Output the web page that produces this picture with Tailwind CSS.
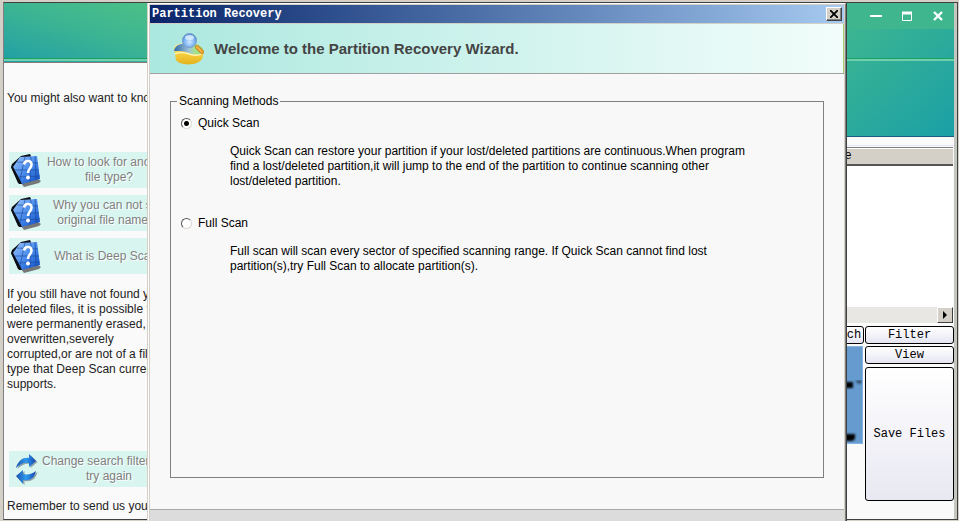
<!DOCTYPE html>
<html lang="en">
<head>
<meta charset="utf-8">
<title>Partition Recovery</title>
<script src="https://cdn.jsdelivr.net/npm/@tailwindcss/browser@4"></script>
</head>
<body class="relative h-screen overflow-hidden bg-[#d4d0c8] font-['Liberation_Sans',Arial,sans-serif] text-[12px] leading-[15px] text-[#222]">
<svg class="absolute h-0 w-0" aria-hidden="true">
  <defs>
    <linearGradient id="bk" x1="0" y1="0" x2="1" y2="1"><stop offset="0" stop-color="#9cc6fc"/><stop offset=".5" stop-color="#4a8cec"/><stop offset="1" stop-color="#0a48c0"/></linearGradient>
    <linearGradient id="ar" x1="0" y1="0" x2="1" y2="0"><stop offset="0" stop-color="#1b4fa8"/><stop offset=".5" stop-color="#2f9bee"/><stop offset="1" stop-color="#1544b0"/></linearGradient>
    <linearGradient id="gold" x1="0" y1="0" x2="0" y2="1"><stop offset="0" stop-color="#fdf0a0"/><stop offset=".5" stop-color="#f5cf3c"/><stop offset="1" stop-color="#e5b21e"/></linearGradient>
    <linearGradient id="disk" x1="0" y1="0" x2="1" y2="0"><stop offset="0" stop-color="#2f69a8"/><stop offset=".5" stop-color="#9cc3d8"/><stop offset=".7" stop-color="#a5e28c"/><stop offset="1" stop-color="#8fd680"/></linearGradient>
    <radialGradient id="lens" cx=".5" cy=".6" r=".6"><stop offset="0" stop-color="#cfe8ff"/><stop offset=".6" stop-color="#7fb6f5"/><stop offset="1" stop-color="#3f7fd0"/></radialGradient>
    <symbol id="book" viewBox="0 0 32 34">
      <path d="M11 3 20 1 21 3 14 20 11 31 8 30 1 14 2 11Z" fill="#0b0f18"/>
      <path d="M11 30 28 26 31 28 29 30 14 34Z" fill="#777"/>
      <path d="M10 4 27 3 30 26 12 31 3 14Z" fill="url(#bk)"/>
      <path d="M1 14 3 14 12 31 9 31Z" fill="#0b0f18"/>
      <path d="M7 9 28 10M5 17 29 17M8 24 30 23M15 4 10 27M21 4 20 29M25 3 26 27" stroke="#1a4596" stroke-width=".6" fill="none"/>
      <path d="M14 11.500C14.500 7 21.500 6.500 21.500 11.500 21.500 15.500 18 15.500 18 20" fill="none" stroke="#fff" stroke-width="2.600"/>
      <circle cx="18" cy="24.500" r="2" fill="#fff"/>
    </symbol>
  </defs>
</svg>

<main class="absolute top-[2px] right-px bottom-px left-[3px] flex justify-between border border-[#404040] border-l-[#808080] bg-[#fafafa]">
  <aside class="flex w-[190px] flex-col overflow-hidden whitespace-nowrap">
    <div class="h-[60px] shrink-0 border-b border-[#857b7b] bg-linear-to-tr from-[#1f9fa5] via-[#3db592] to-[#50c383]">
      <div class="mt-[55px] h-[3px] border-t border-[#20a060] bg-[#6fd0b0]"></div>
    </div>
    <p class="mt-7 px-[3px]">You might also want to know:</p>
    <nav class="mt-[46px] flex flex-col gap-[7px] px-[5px] text-center text-[#808080] [text-shadow:1px_1px_0_#fff]">
      <a href="#" class="flex h-9 items-center bg-[#d9f5f0]"><svg class="ml-[1px] h-[34px] w-8 shrink-0"><use href="#book"/></svg><span class="w-[134px]">How to look for another<br>file type?</span></a>
      <a href="#" class="flex h-9 items-center bg-[#d9f5f0]"><svg class="ml-[1px] h-[34px] w-8 shrink-0"><use href="#book"/></svg><span class="w-[134px]">Why you can not see<br>original file names?</span></a>
      <a href="#" class="flex h-9 items-center bg-[#d9f5f0]"><svg class="ml-[1px] h-[34px] w-8 shrink-0"><use href="#book"/></svg><span class="w-[134px]">What is Deep Scan?</span></a>
    </nav>
    <p class="mt-[13px] px-[3px]">If you still have not found your<br>deleted files, it is possible they<br>were permanently erased,<br>overwritten,severely<br>corrupted,or are not of a file<br>type that Deep Scan currently<br>supports.</p>
    <div class="mt-auto mb-[5px]">
      <a href="#" class="mx-[5px] flex h-9 items-center bg-[#d9f5f0] text-center text-[#808080] [text-shadow:1px_1px_0_#fff]">
        <svg class="ml-[5px] h-8 w-7 shrink-0" viewBox="0 0 28 32"><path d="M2 15C4 7 10 4 15 5V1L22 8 15 14V10C10 9 6 11 2 15ZM22 18C20 26 15 28 9 27V31L2 23 9 17V21C14 22 18 21 22 18Z" fill="#8fa3a8" transform="translate(1.500 1)"/><path d="M2 15C4 7 10 4 15 5V1L22 8 15 14V10C10 9 6 11 2 15Z" fill="url(#ar)"/><path d="M22 18C20 26 15 28 9 27V31L2 23 9 17V21C14 22 18 21 22 18Z" fill="url(#ar)"/></svg>
        <span class="w-[134px]">Change search filters and<br>try again</span></a>
      <p class="mt-3 px-[3px]">Remember to send us your</p>
    </div>
  </aside>

  <section class="flex w-[156px] flex-col border-r-[3px] border-[#c4c6c0]">
    <header class="h-[134px] shrink-0 border-b border-[#1b5c80] bg-linear-to-br from-[#47bc8a] via-[#30ae98] to-[#1b9fa6]">
      <div class="flex h-[26px] items-center justify-end gap-[15px] bg-[#3fb68d] pr-2 text-white">
        <button aria-label="Minimize"><svg class="h-4 w-4" viewBox="0 0 16 16"><path d="M2 8h12" stroke="#fff" stroke-width="2"/></svg></button>
        <button aria-label="Maximize"><svg class="h-4 w-4" viewBox="0 0 16 16"><path d="M3.500 4.500h9v8h-9z" fill="none" stroke="#fff"/><path d="M3 5h10" stroke="#fff" stroke-width="3"/></svg></button>
        <button aria-label="Close"><svg class="h-4 w-4" viewBox="0 0 16 16"><path d="M4 4 12 12M12 4 4 12" stroke="#fff" stroke-width="2.400"/></svg></button>
      </div>
      <div class="mt-[29px] h-[3px] border-t border-[#20a060] bg-[#6fd0b0]"></div>
    </header>
    <div class="mt-2 flex h-[179px] shrink-0 flex-col border-t border-[#e4e6fa] pt-px pr-px">
      <div class="flex grow flex-col border-t border-[#808080] bg-white pt-px pb-px">
        <table class="w-full border-b-2 border-[#555] bg-[#d4d0c8]"><thead><tr><th class="h-4 p-0 pl-[22px] text-left font-['Liberation_Mono',monospace] font-normal text-black">Size</th></tr></thead></table>
        <div class="mt-auto flex h-4 justify-end bg-[#e9e7e3]">
          <button aria-label="Scroll right" class="flex w-4 items-center justify-center border border-t-white border-r-[#404040] border-b-[#404040] border-l-white bg-[#d4d0c8]"><svg class="h-2 w-2" viewBox="0 0 8 8"><path d="M2 0 6 4 2 8z"/></svg></button>
        </div>
      </div>
    </div>
    <div class="grid grow grid-cols-[49px_89px] grid-rows-[18px_18px_1fr] justify-end gap-x-px gap-y-[2px] pt-[2px] pb-[18px] font-['Liberation_Mono',monospace] text-black">
      <button class="rounded-[3px] border border-black bg-linear-to-b from-white to-[#e6e6f2] leading-4">Search</button>
      <button class="rounded-[3px] border border-black bg-linear-to-b from-white to-[#e6e6f2] leading-4">Filter</button>
      <div class="row-span-2 mr-px mb-[57px] border border-[#85b4e2] bg-[#669bd0] pt-[33px]">
        <svg class="ml-auto h-[62px] w-5" viewBox="0 0 20 62"><g class="blur-[1px]"><path d="M0 2h11v6H0z" fill="#000"/><path d="M13 0h7v3l-4 1z" fill="#35526f"/><path d="M0 54h13v5l-3 2H0z" fill="#000"/></g></svg>
      </div>
      <button class="rounded-[3px] border border-black bg-linear-to-b from-white to-[#e6e6f2] leading-4">View</button>
      <button class="mt-px rounded-[3px] border border-black bg-linear-to-b from-white to-[#e8e8f2]">Save Files</button>
    </div>
  </section>
</main>

<div role="dialog" aria-labelledby="dlg-title" class="absolute top-[3px] right-28 bottom-0 left-[147px] flex flex-col border-r border-l border-r-[#404040] border-l-[#d4d0c8] bg-[#d4d0c8]">
  <div class="flex grow flex-col border-t border-r border-l border-t-white border-r-[#808080] border-l-white p-px pb-0">
    <div class="flex h-[18px] items-center justify-between bg-linear-to-r from-[#0a246a] to-[#a6caf0] pr-[2px] pl-[2px]">
      <h1 id="dlg-title" class="font-['Liberation_Mono',monospace] font-bold text-white">Partition Recovery</h1>
      <button aria-label="Close" class="flex h-[14px] w-4 items-center justify-center border border-t-white border-r-[#404040] border-b-[#404040] border-l-white bg-[#d4d0c8] shadow-[inset_-1px_-1px_0_#808080]"><svg class="h-2 w-2" viewBox="0 0 8 8"><path d="M0 0 8 8M8 0 0 8" stroke="#000" stroke-width="1.800"/></svg></button>
    </div>
    <header class="mt-px flex h-[49px] items-center border-r border-[#a4cf6a] bg-linear-to-r from-[#abe8df] to-[#f2fdfb] pl-6">
      <svg class="h-8 w-8 shrink-0" viewBox="0 0 32 32">
        <path d="M0 15C1 11 6 10 15 10S29 14 30 19L28 26C24 33 6 33 2 27Z" fill="url(#gold)"/>
        <path d="M0 18C1 12 7 10 15 10S29 13 30 19C25 23 19 22 15 20S5 18 0 18Z" fill="url(#disk)"/>
        <path d="M1 21C6 18 12 20 15 21S24 24 29 20" fill="none" stroke="#fff3b0" stroke-width="1.500"/>
        <path d="M23 14 28 19" stroke="#c98420" stroke-width="4" stroke-linecap="round"/>
        <path d="M23 14 28 19" stroke="#f6b64a" stroke-width="2" stroke-linecap="round"/>
        <circle cx="15.500" cy="7.500" r="7" fill="url(#lens)" stroke="#7c9cc8"/>
        <ellipse cx="15.500" cy="4.500" rx="4.500" ry="2.500" fill="#e4f2ff" opacity=".8"/>
      </svg>
      <h2 class="ml-2 text-[15px] font-bold text-[#444]">Welcome to the Partition Recovery Wizard.</h2>
    </header>
    <div class="flex grow flex-col border-t border-[#a0a0a0] bg-[#f8f8f8] px-5 pt-5 pb-[31px] text-black">
      <fieldset class="grow border border-[#808080] px-[10px] pb-2">
        <legend class="-ml-[4px] px-[2px]">Scanning Methods</legend>
        <label class="flex items-center gap-[6px] pt-[7px]"><input type="radio" name="method" checked class="h-[11px] w-[11px] appearance-none rounded-full border border-t-[#555] border-r-[#dcd8d0] border-b-[#dcd8d0] border-l-[#555] bg-white checked:bg-[radial-gradient(circle,#000_2px,#fff_3px)]">Quick Scan</label>
        <p class="mt-[13px] pl-[49px]">Quick Scan can restore your partition if your lost/deleted partitions are continuous.When program<br>find a lost/deleted partition,it will jump to the end of the partition to continue scanning other<br>lost/deleted partition.</p>
        <label class="mt-[27px] flex items-center gap-[6px]"><input type="radio" name="method" class="h-[11px] w-[11px] appearance-none rounded-full border border-t-[#555] border-r-[#dcd8d0] border-b-[#dcd8d0] border-l-[#555] bg-white checked:bg-[radial-gradient(circle,#000_2px,#fff_3px)]">Full Scan</label>
        <p class="mt-[13px] pl-[49px]">Full scan will scan every sector of specified scanning range. If Quick Scan cannot find lost<br>partition(s),try Full Scan to allocate partition(s).</p>
      </fieldset>
    </div>
    <footer class="h-3 border-t border-[#a8a8a8] bg-[#dcdcdc]"></footer>
  </div>
</div>
</body>
</html>
